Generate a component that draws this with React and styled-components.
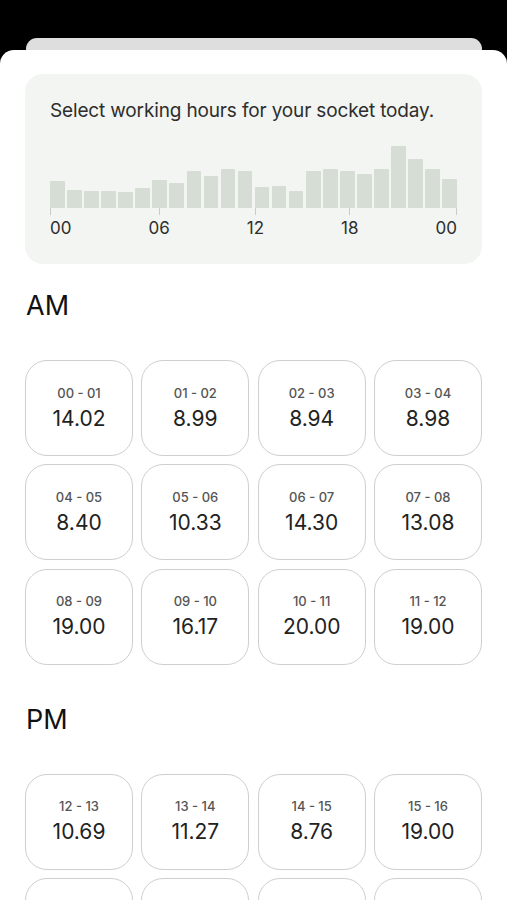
import React from 'react';
import styled, { createGlobalStyle } from 'styled-components';

const hours = [
  14.02, 8.99, 8.94, 8.98, 8.4, 10.33, 14.3, 13.08, 19.0, 16.17, 20.0, 19.0,
  10.69, 11.27, 8.76, 19.0, 20.0, 19.0, 17.2, 20.0, 31.6, 25.1, 20.0, 14.9,
];

const pad = (n) => String(n).padStart(2, '0');

const slots = hours.map((price, i) => ({
  range: `${pad(i)} - ${pad(i + 1)}`,
  price: price.toFixed(2),
}));

const axis = ['00', '06', '12', '18', '00'];

const App = () => {
  return (
    <>
      <GlobalStyle />
      <Backdrop>
        <BackCard />
        <Sheet>
          <Hero>
            <Intro>Select working hours for your socket today.</Intro>
            <Bars>
              {hours.map((v, i) => (
                <Bar key={i} style={{ height: `${v * 1.95}px` }} />
              ))}
            </Bars>
            <Axis>
              {axis.map((label, i) => (
                <Tick key={i} $pos={i === 0 ? 'flex-start' : i === axis.length - 1 ? 'flex-end' : 'center'}>
                  <span />
                  {label}
                </Tick>
              ))}
            </Axis>
          </Hero>

          <Heading>AM</Heading>
          <Grid>
            {slots.slice(0, 12).map((s) => (
              <Slot key={s.range}>
                <Range>{s.range}</Range>
                <Price>{s.price}</Price>
              </Slot>
            ))}
          </Grid>

          <Heading $top={39}>PM</Heading>
          <Grid>
            {slots.slice(12).map((s) => (
              <Slot key={s.range}>
                <Range>{s.range}</Range>
                <Price>{s.price}</Price>
              </Slot>
            ))}
          </Grid>
        </Sheet>
      </Backdrop>
    </>
  );
};

export default App;

const GlobalStyle = createGlobalStyle`
  * { box-sizing: border-box; }
  body {
    margin: 0;
    background: #000;
    font-family: Inter, "Noto Sans", sans-serif;
    -webkit-font-smoothing: antialiased;
  }
`;

const Backdrop = styled.div`
  padding-top: 38px;
  background: #000;
  min-height: 100vh;
`;

const BackCard = styled.div`
  height: 12px;
  margin: 0 25px 0 26px;
  background: #dedede;
  border-radius: 11px 11px 0 0;
`;

const Sheet = styled.main`
  background: #fff;
  border-radius: 14px 14px 0 0;
  padding: 24px 25px 40px;
  min-height: 900px;
`;

const Hero = styled.section`
  background: #f2f5f1;
  border-radius: 18px;
  padding: 25px 25px 26px;
`;

const Intro = styled.p`
  margin: 0;
  font-size: 19px;
  line-height: 24px;
  color: #2e2e2e;
  letter-spacing: -0.15px;
`;

const Bars = styled.div`
  margin-top: 15px;
  height: 70px;
  display: flex;
  align-items: flex-end;
  gap: 2.5px;
`;

const Bar = styled.div`
  flex: 1;
  background: #d6ddd5;
  border-radius: 1px 1px 0 0;
`;

const Axis = styled.div`
  display: flex;
  justify-content: space-between;
`;

const Tick = styled.div`
  display: flex;
  flex-direction: column;
  align-items: ${(p) => p.$pos};
  font-size: 17px;
  line-height: 20px;
  color: #2e2e2e;
  span {
    width: 1px;
    height: 7px;
    margin-bottom: 3px;
    background: #c6cdc5;
  }
`;

const Heading = styled.h2`
  margin: ${(p) => p.$top || 26}px 0 38px 1px;
  font-size: 27px;
  line-height: 32px;
  font-weight: 400;
  color: #111;
`;

const Grid = styled.div`
  display: grid;
  grid-template-columns: repeat(4, 1fr);
  gap: 8.3px;
`;

const Slot = styled.button`
  height: 96px;
  display: flex;
  flex-direction: column;
  align-items: center;
  justify-content: center;
  gap: 5px;
  padding: 0;
  background: #fff;
  border: 1px solid #cfcfcf;
  border-radius: 22px;
  font-family: inherit;
  cursor: pointer;
`;

const Range = styled.span`
  font-size: 13px;
  line-height: 16px;
  color: #555;
  font-weight: 500;
`;

const Price = styled.span`
  font-size: 21px;
  line-height: 26px;
  color: #222;
`;
